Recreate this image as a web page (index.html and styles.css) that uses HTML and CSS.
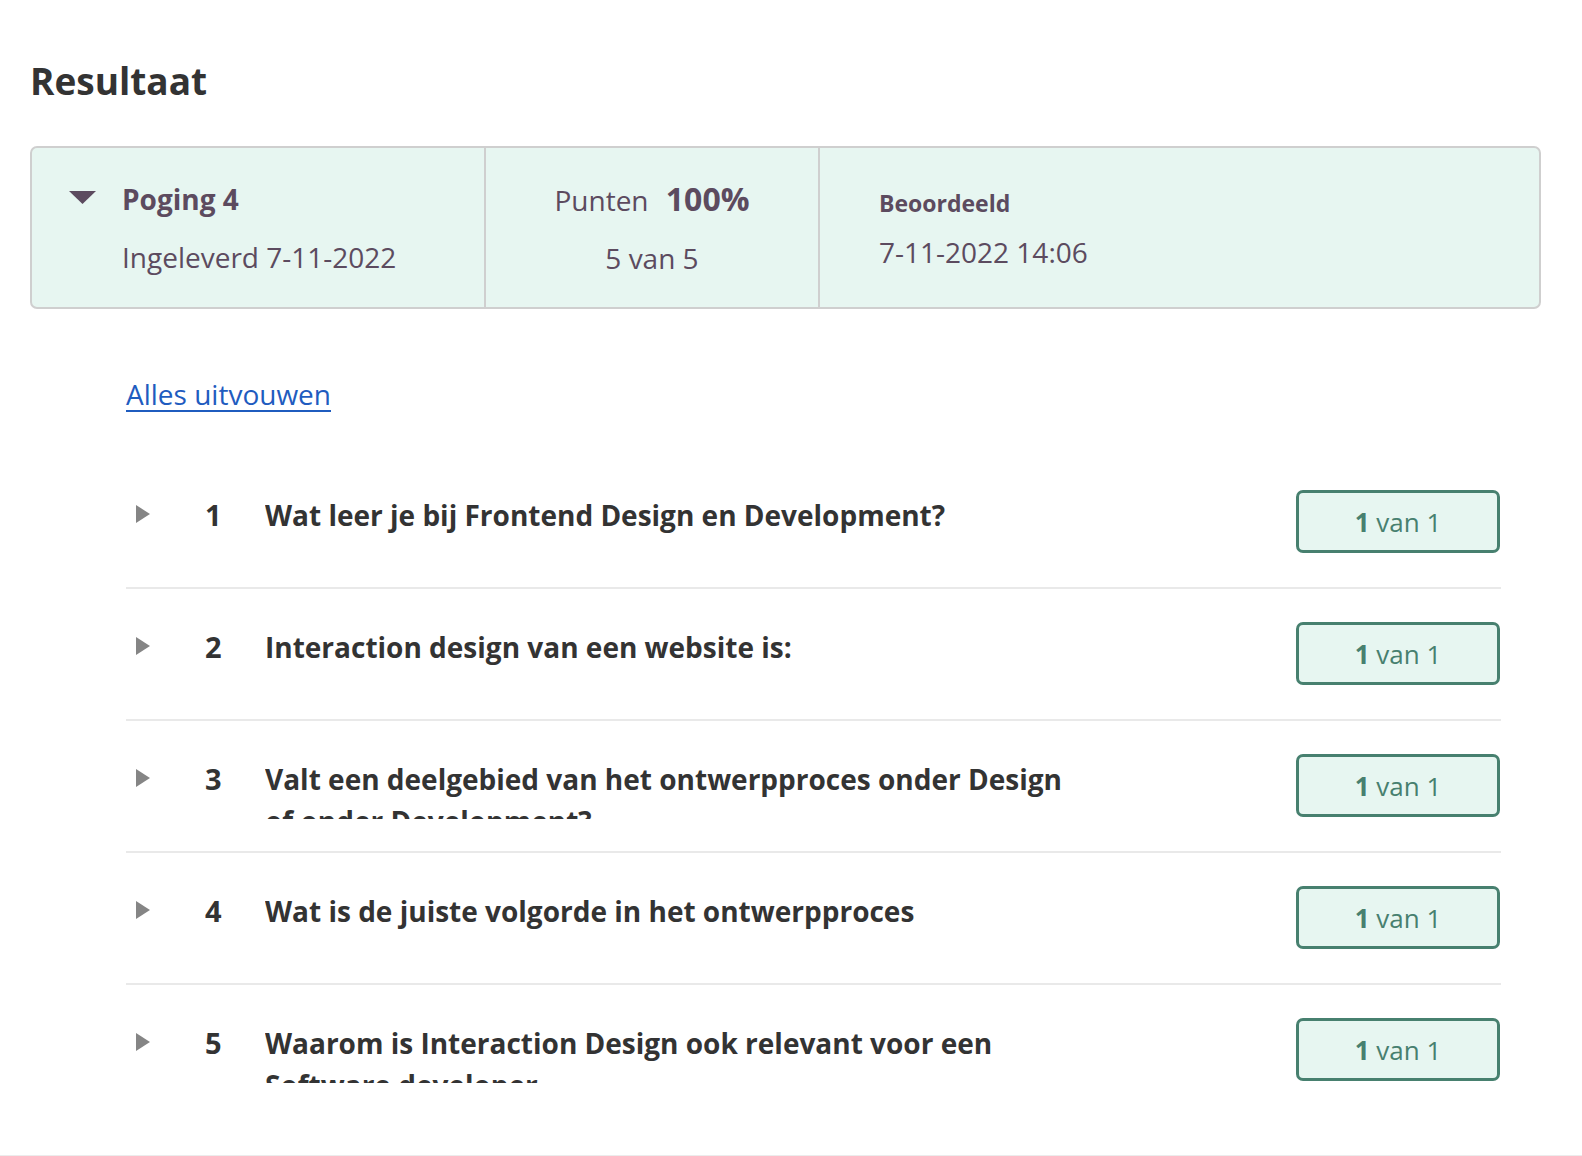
FILE: index.html
```html
<!DOCTYPE html>
<html lang="nl">
<head>
<meta charset="utf-8">
<title>Resultaat</title>
<link rel="stylesheet" href="styles.css">
</head>
<body>
<main class="page">
  <h1 class="title">Resultaat</h1>

  <section class="attempt">
    <div class="attempt-col attempt-main">
      <svg class="caret-down" width="27" height="13" viewBox="0 0 27 13"><polygon points="0,0 27,0 13.5,13" fill="#5c4b5f"/></svg>
      <div class="attempt-text">
        <div class="line strong">Poging 4</div>
        <div class="line second">Ingeleverd 7-11-2022</div>
      </div>
    </div>
    <div class="attempt-col attempt-score">
      <div class="line">Punten <strong class="pct">100%</strong></div>
      <div class="line second">5 van 5</div>
    </div>
    <div class="attempt-col attempt-graded">
      <div class="graded-label">Beoordeeld</div>
      <div class="line graded-date">7-11-2022 14:06</div>
    </div>
  </section>

  <a class="expand-all" href="#">Alles uitvouwen</a>

  <ol class="questions">
    <li class="question">
      <svg class="caret-right" width="14" height="18" viewBox="0 0 14 18"><polygon points="0,0 14,9 0,18" fill="#858585"/></svg>
      <span class="q-num">1</span>
      <div class="q-text">Wat leer je bij Frontend Design en Development?</div>
      <div class="score"><b>1</b> van 1</div>
    </li>
    <li class="question">
      <svg class="caret-right" width="14" height="18" viewBox="0 0 14 18"><polygon points="0,0 14,9 0,18" fill="#858585"/></svg>
      <span class="q-num">2</span>
      <div class="q-text">Interaction design van een website is:</div>
      <div class="score"><b>1</b> van 1</div>
    </li>
    <li class="question">
      <svg class="caret-right" width="14" height="18" viewBox="0 0 14 18"><polygon points="0,0 14,9 0,18" fill="#858585"/></svg>
      <span class="q-num">3</span>
      <div class="q-text">Valt een deelgebied van het ontwerpproces onder Design of onder Development?</div>
      <div class="score"><b>1</b> van 1</div>
    </li>
    <li class="question">
      <svg class="caret-right" width="14" height="18" viewBox="0 0 14 18"><polygon points="0,0 14,9 0,18" fill="#858585"/></svg>
      <span class="q-num">4</span>
      <div class="q-text">Wat is de juiste volgorde in het ontwerpproces</div>
      <div class="score"><b>1</b> van 1</div>
    </li>
    <li class="question last">
      <svg class="caret-right" width="14" height="18" viewBox="0 0 14 18"><polygon points="0,0 14,9 0,18" fill="#858585"/></svg>
      <span class="q-num">5</span>
      <div class="q-text">Waarom is Interaction Design ook relevant voor een Software developer</div>
      <div class="score"><b>1</b> van 1</div>
    </li>
  </ol>
</main>
<div class="page-end"></div>
</body>
</html>
```

FILE: styles.css
```css
html, body {
  margin: 0;
  padding: 0;
  background: #ffffff;
}

body {
  font-family: "Open Sans", "Liberation Sans", sans-serif;
  color: #333333;
  font-size: 28px;
  overflow: hidden;
}

.page {
  padding: 57px 41px 0 30px;
}

.title {
  margin: 0;
  font-size: 37px;
  line-height: 48px;
  font-weight: 700;
  color: #333333;
}

.attempt {
  margin-top: 41px;
  display: grid;
  grid-template-columns: 454px 334px 1fr;
  background: #e7f6f1;
  border: 2px solid #cfcfcf;
  border-radius: 7px;
  color: #5c4b5f;
}

.attempt-col {
  padding: 30px 0 28px 0;
}

.attempt-main {
  display: flex;
  align-items: flex-start;
  padding-left: 37px;
  border-right: 2px solid #cfcfcf;
}

.caret-down {
  margin-top: 13px;
  margin-right: 26px;
  flex: none;
}

.line {
  font-size: 28px;
  line-height: 42px;
  white-space: nowrap;
}

.line.second {
  margin-top: 16px;
}

.strong {
  font-weight: 700;
}

.attempt-score {
  text-align: center;
  border-right: 2px solid #cfcfcf;
}

.pct {
  font-weight: 700;
  font-size: 32px;
  margin-left: 10px;
}

.attempt-graded {
  padding-top: 38px;
  padding-left: 59px;
}

.graded-label {
  font-size: 23px;
  line-height: 34px;
  font-weight: 700;
}

.graded-date {
  margin-top: 11px;
}

.expand-all {
  display: inline-block;
  margin: 64px 0 0 96px;
  font-size: 28px;
  line-height: 42px;
  color: #1f5cbf;
  text-decoration: underline;
  text-decoration-thickness: 2px;
  text-underline-offset: 5px;
}

.questions {
  list-style: none;
  margin: 42px 0 0 96px;
  padding: 0;
  width: 1375px;
}

.question {
  display: flex;
  align-items: flex-start;
  height: 130px;
  box-sizing: content-box;
  padding: 0;
  border-bottom: 2px solid #e9e9e9;
}

.question.last {
  border-bottom: none;
}

.caret-right {
  flex: none;
  margin: 48px 0 0 10px;
}

.q-num {
  flex: none;
  width: 60px;
  margin: 37px 0 0 55px;
  font-size: 29px;
  line-height: 42px;
  font-weight: 700;
  color: #333333;
}

.q-text {
  flex: none;
  width: 820px;
  height: 61px;
  overflow: hidden;
  margin-top: 37px;
  font-size: 28px;
  line-height: 42px;
  font-weight: 700;
  color: #333333;
}

.score {
  flex: none;
  margin-left: auto;
  margin-top: 33px;
  margin-right: 1px;
  width: 198px;
  height: 57px;
  border: 3px solid #47806f;
  border-radius: 7px;
  background: #e7f6f1;
  color: #47806f;
  font-size: 26px;
  line-height: 58px;
  text-align: center;
}

.score b {
  font-weight: 700;
}

.page-end {
  margin-top: 40px;
  border-top: 2px solid #ececec;
}
```
